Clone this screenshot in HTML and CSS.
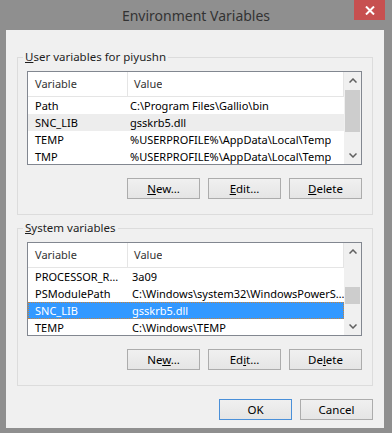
FILE: index.html
```html
<!DOCTYPE html>
<html lang="en">
<head>
    <meta charset="UTF-8">
    <title>Environment Variables</title>
    <link rel="stylesheet" href="styles.css">
</head>
<body>
    <div class="window">
        <div class="titlebar">
            <div class="title">Environment Variables</div>
            <div class="close">
                <svg width="10" height="9" viewBox="0 0 10 9"><path d="M1 0.5 L9 8.5 M9 0.5 L1 8.5" stroke="#fff" stroke-width="2"/></svg>
            </div>
        </div>

        <div class="client">
            <fieldset class="group">
                <legend><u>U</u>ser variables for piyushn</legend>
                <div class="list user-list">
                    <div class="list-body">
                        <div class="list-head">
                            <div class="cell col-name">Variable</div>
                            <div class="cell col-value">Value</div>
                        </div>
                        <div class="row">
                            <div class="cell col-name">Path</div>
                            <div class="cell col-value">C:\Program Files\Gallio\bin</div>
                        </div>
                        <div class="row inactive">
                            <div class="cell col-name">SNC_LIB</div>
                            <div class="cell col-value">gsskrb5.dll</div>
                        </div>
                        <div class="row">
                            <div class="cell col-name">TEMP</div>
                            <div class="cell col-value">%USERPROFILE%\AppData\Local\Temp</div>
                        </div>
                        <div class="row">
                            <div class="cell col-name">TMP</div>
                            <div class="cell col-value">%USERPROFILE%\AppData\Local\Temp</div>
                        </div>
                    </div>
                    <div class="scrollbar">
                        <div class="arrow">
                            <svg width="8" height="5" viewBox="0 0 8 5"><path d="M0.5 4.5 L4 1 L7.5 4.5" fill="none" stroke="#606060" stroke-width="1.5"/></svg>
                        </div>
                        <div class="track">
                            <div class="thumb" style="margin-top: 1px; height: 42px;"></div>
                        </div>
                        <div class="arrow">
                            <svg width="8" height="5" viewBox="0 0 8 5"><path d="M0.5 0.5 L4 4 L7.5 0.5" fill="none" stroke="#606060" stroke-width="1.5"/></svg>
                        </div>
                    </div>
                </div>
                <div class="buttons">
                    <button><u>N</u>ew…</button>
                    <button><u>E</u>dit…</button>
                    <button><u>D</u>elete</button>
                </div>
            </fieldset>

            <fieldset class="group">
                <legend><u>S</u>ystem variables</legend>
                <div class="list system-list">
                    <div class="list-body">
                        <div class="list-head">
                            <div class="cell col-name">Variable</div>
                            <div class="cell col-value">Value</div>
                        </div>
                        <div class="row">
                            <div class="cell col-name">PROCESSOR_R…</div>
                            <div class="cell col-value">3a09</div>
                        </div>
                        <div class="row">
                            <div class="cell col-name">PSModulePath</div>
                            <div class="cell col-value">C:\Windows\system32\WindowsPowerS…</div>
                        </div>
                        <div class="row selected">
                            <div class="cell col-name">SNC_LIB</div>
                            <div class="cell col-value">gsskrb5.dll</div>
                        </div>
                        <div class="row">
                            <div class="cell col-name">TEMP</div>
                            <div class="cell col-value">C:\Windows\TEMP</div>
                        </div>
                    </div>
                    <div class="scrollbar">
                        <div class="arrow">
                            <svg width="8" height="5" viewBox="0 0 8 5"><path d="M0.5 4.5 L4 1 L7.5 4.5" fill="none" stroke="#606060" stroke-width="1.5"/></svg>
                        </div>
                        <div class="track">
                            <div class="thumb" style="margin-top: 27px; height: 17px;"></div>
                        </div>
                        <div class="arrow">
                            <svg width="8" height="5" viewBox="0 0 8 5"><path d="M0.5 0.5 L4 4 L7.5 0.5" fill="none" stroke="#606060" stroke-width="1.5"/></svg>
                        </div>
                    </div>
                </div>
                <div class="buttons">
                    <button>Ne<u>w</u>…</button>
                    <button>Ed<u>i</u>t…</button>
                    <button>De<u>l</u>ete</button>
                </div>
            </fieldset>

            <div class="buttons dialog-buttons">
                <button class="default">OK</button>
                <button>Cancel</button>
            </div>
        </div>
    </div>
</body>
</html>
```

FILE: styles.css
```css
body {
    margin: 0;
    padding: 0;
    background-color: #8f8f8f;
    font-family: 'Noto Sans', 'Liberation Sans', sans-serif;
    font-size: 11px;
    color: #000000;
}
.window {
    width: 392px;
    height: 433px;
    display: flex;
    flex-direction: column;
}
.titlebar {
    height: 30px;
    display: grid;
    grid-template-areas: "bar";
}
.title {
    grid-area: bar;
    justify-self: center;
    align-self: center;
    font-size: 14px;
    color: #333333;
}
.close {
    grid-area: bar;
    justify-self: end;
    align-self: start;
    width: 31px;
    height: 20px;
    margin-right: 7px;
    background-color: #c75050;
    display: flex;
    justify-content: center;
    align-items: center;
}
.client {
    height: 398px;
    margin: 0 8px 0 6px;
    padding: 19px 11px 0 11px;
    box-sizing: border-box;
    background-color: #f0f0f0;
}
.group {
    margin: 0 0 5px 0;
    padding: 6px 10px 15px 9px;
    border: 1px solid #dcdcdc;
    min-width: 0;
}
.group legend {
    padding: 0 2px;
    margin-left: -4px;
    line-height: 16px;
    font-size: 11.5px;
    color: #1e1e1e;
}
.list {
    height: 94px;
    box-sizing: border-box;
    border: 1px solid #828790;
    background-color: #ffffff;
    display: flex;
    overflow: hidden;
}
.list-body {
    flex: 1;
    min-width: 0;
}
.list-head {
    display: flex;
    height: 24px;
    border-bottom: 1px solid #e5e5e5;
    border-right: 1px solid #e5e5e5;
    color: #333333;
}
.list-head .cell {
    line-height: 24px;
}
.row {
    display: flex;
    height: 17px;
    box-sizing: border-box;
}
.cell {
    white-space: nowrap;
    overflow: hidden;
    line-height: 17px;
}
.col-name {
    width: 92px;
    padding-left: 7px;
    flex-shrink: 0;
}
.list-head .col-name {
    border-right: 1px solid #e5e5e5;
}
.row .col-name {
    margin-right: 1px;
}
.col-value {
    padding-left: 6px;
}
.user-list .row .col-value {
    padding-left: 2px;
}
.system-list .row .col-value {
    padding-left: 4px;
}
.row.inactive {
    background-color: #ededed;
}
.row.selected {
    background-color: #3399ff;
    color: #ffffff;
    border: 1px dotted #c8843a;
}
.row.selected .cell {
    line-height: 15px;
}
.row.selected .col-name {
    padding-left: 6px;
}
.scrollbar {
    width: 17px;
    flex-shrink: 0;
    background-color: #f0f0f0;
    display: flex;
    flex-direction: column;
}
.arrow {
    height: 17px;
    display: flex;
    justify-content: center;
    align-items: center;
}
.track {
    flex: 1;
}
.thumb {
    margin-left: 1px;
    margin-right: 1px;
    background-color: #cdcdcd;
}
.buttons {
    display: flex;
    justify-content: flex-end;
    gap: 8px;
    margin-top: 13px;
}
.buttons button {
    width: 73px;
    height: 21px;
    padding: 0;
    border: 1px solid #acacac;
    background: linear-gradient(#f0f0f0, #e5e5e5);
    font-family: 'Noto Sans', 'Liberation Sans', sans-serif;
    font-size: 11.5px;
    color: #000000;
}
.dialog-buttons {
    margin-top: 13px;
}
.buttons button.default {
    border-color: #4a90d9;
}
```
